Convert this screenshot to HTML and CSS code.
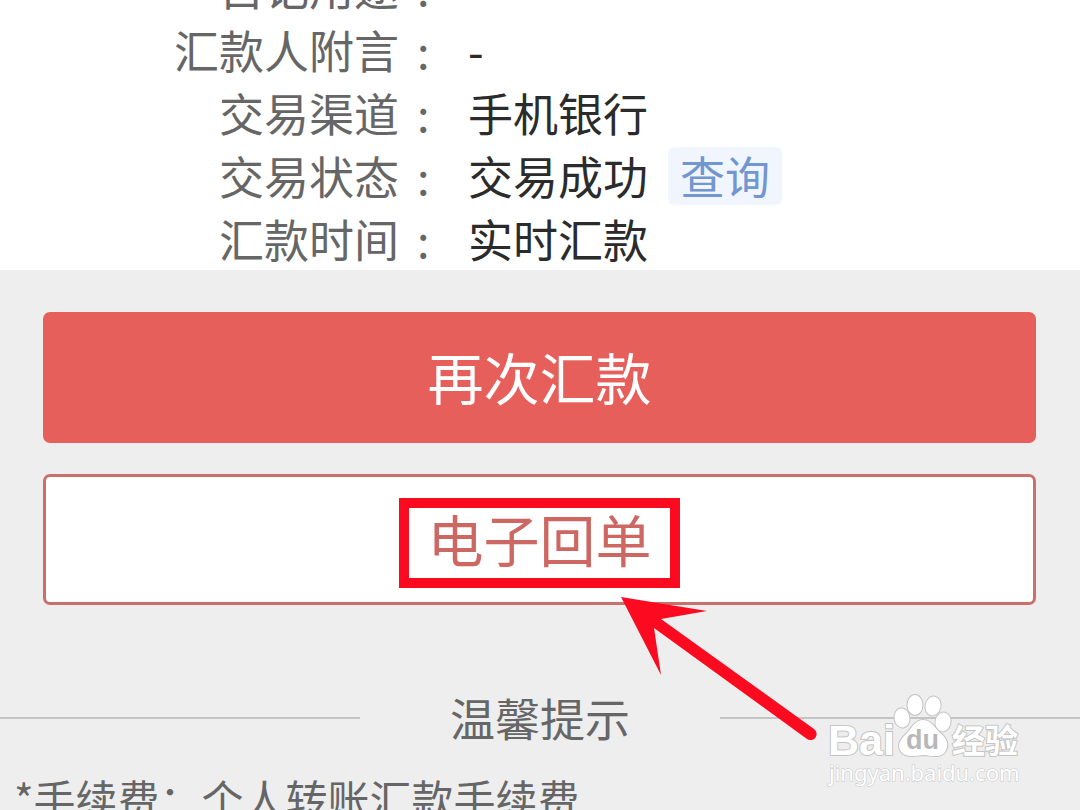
FILE: index.html
```html
<!DOCTYPE html>
<html lang="zh-CN">
<head>
    <meta charset="UTF-8">
    <meta name="viewport" content="width=device-width, initial-scale=1.0">
    <title>汇款详情</title>
    <link rel="stylesheet" href="styles.css">
</head>
<body>

    <dl class="details">
        <dt>自记用途</dt>
        <dd></dd>
        <dt>汇款人附言</dt>
        <dd>-</dd>
        <dt>交易渠道</dt>
        <dd>手机银行</dd>
        <dt>交易状态</dt>
        <dd>交易成功 <a class="query-link" href="#">查询</a></dd>
        <dt>汇款时间</dt>
        <dd>实时汇款</dd>
    </dl>

    <div class="actions">
        <button class="action-button primary" type="button">再次汇款</button>
        <div class="marked">
            <button class="action-button outline" type="button">电子回单</button>
            <div class="mark-box"></div>
            <svg class="mark-arrow" width="200" height="150" viewBox="0 0 200 150" aria-hidden="true">
                <path d="M1 0 L87 14 L41 22 L194 132 A6 6 0 0 1 187 142 L34 31 L41 78 Z" fill="#fb0a20"/>
            </svg>
        </div>
    </div>

    <div class="tips">
        <h2 class="tips-title">温馨提示</h2>
        <p class="tips-text">*手续费：个人转账汇款手续费</p>
    </div>

    <!-- Watermark -->
    <svg class="watermark" width="210" height="100" viewBox="0 0 210 100">
        <g class="logo">
            <text class="logo-latin" x="8" y="62">Bai</text>
            <ellipse cx="82" cy="25" rx="7.5" ry="9.5" transform="rotate(-8 82 25)"/>
            <ellipse cx="95" cy="12" rx="7.5" ry="10"/>
            <ellipse cx="113" cy="13" rx="7.5" ry="9.5" transform="rotate(12 113 13)"/>
            <ellipse cx="123" cy="29" rx="7.5" ry="9.5" transform="rotate(12 123 29)"/>
            <path d="M103 27 C110 27 114 33 119 39 C127 45 129 51 126 57 C123 65 114 63 104 62 C94 63 84 65 80 57 C77 51 81 46 87 40 C92 34 96 27 103 27 Z"/>
            <text class="logo-du" x="86" y="56">du</text>
            <text class="logo-cn" x="132" y="60">经验</text>
        </g>
        <text class="logo-url" x="9" y="88">jingyan.baidu.com</text>
    </svg>

</body>
</html>
```
FILE: styles.css
```css
* {
    box-sizing: border-box;
}

body {
    margin: 0;
    position: relative;
    height: 100vh;
    overflow: hidden;
    background-color: #eeeeee;
    color: #666666;
    font-family: "Noto Sans CJK SC", sans-serif;
}

/* Transfer details */
.details {
    display: grid;
    grid-template-columns: 399px 1fr;
    column-gap: 69px;
    margin: 0;
    margin-top: -45px;
    background-color: #ffffff;
    font-size: 45px;
    line-height: 63px;
}

.details dt {
    position: relative;
    text-align: right;
}

/* The colon hangs in the gap between label and value */
.details dt::after {
    content: ":";
    position: absolute;
    left: 100%;
    padding-left: 18px;
}

.details dd {
    margin: 0;
    height: 63px;
    color: #2b2b2b;
}

.query-link {
    display: inline-block;
    margin-left: 10px;
    padding: 0 12px;
    border-radius: 6px;
    background-color: #f1f5fd;
    color: #7296d0;
    line-height: 58px;
    text-decoration: none;
}

/* Buttons */
.actions {
    display: flex;
    flex-direction: column;
    gap: 31px;
    padding: 42px 44px 0 43px;
}

.action-button {
    display: block;
    width: 100%;
    height: 131px;
    padding: 0 0 4px;
    border: 3px solid #e65f5a;
    border-radius: 7px;
    font-family: inherit;
    font-size: 56px;
    cursor: pointer;
}

.primary {
    background-color: #e65f5a;
    color: #ffffff;
}

.outline {
    border-color: #c9706b;
    background-color: #ffffff;
    color: #cc6762;
}

/* Red box and arrow drawn over the receipt button */
.marked {
    position: relative;
}

.mark-box {
    position: absolute;
    top: 24px;
    left: 50%;
    width: 281px;
    height: 90px;
    margin-left: -141px;
    border: 10px solid #fb0a20;
    pointer-events: none;
}

.mark-arrow {
    position: absolute;
    top: 123px;
    left: 50%;
    margin-left: 80px;
    pointer-events: none;
}

/* Tips */
.tips-title {
    display: grid;
    grid-template-columns: 1fr 1fr 1fr;
    align-items: center;
    margin: 80px 0 0;
    font-size: 45px;
    font-weight: normal;
    line-height: 66px;
    text-align: center;
}

.tips-title::before,
.tips-title::after {
    content: "";
    height: 2px;
    background-color: #c4c4c4;
}

.tips-text {
    margin: 17px 14px 0;
    font-size: 42px;
    line-height: 60px;
    white-space: nowrap;
}

/* Watermark */
.watermark {
    position: absolute;
    right: 50px;
    bottom: 17px;
    fill: #ffffff;
    stroke: #c4c4c4;
    stroke-width: 1px;
    paint-order: stroke;
}

.logo {
    stroke-width: 2px;
}

.logo-latin {
    font: bold 43px "Liberation Sans", sans-serif;
}

.logo-du {
    fill: #b8b8b8;
    stroke: none;
    font: bold 27px "Liberation Sans", sans-serif;
}

.logo-cn {
    font-size: 33px;
    font-weight: bold;
}

.logo-url {
    font: 22px "Noto Sans", sans-serif;
}
```
